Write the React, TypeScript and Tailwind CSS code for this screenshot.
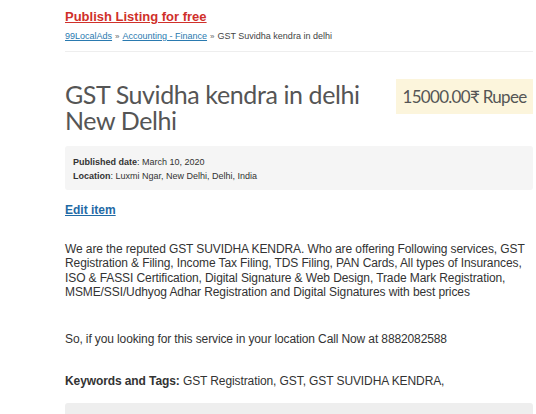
export default function App() {
  return (
    <div className="w-[536px] h-[414px] overflow-hidden bg-white font-['Liberation_Sans',Arial,sans-serif] text-[#333] leading-none">
      <div className="pl-[65px] pr-[3px] pt-[9px]">
        {/* top link */}
        <a href="#" className="block w-fit text-[13px] font-bold text-[#d0302a] underline leading-[16px]">
          Publish Listing for free
        </a>

        {/* breadcrumb */}
        <div className="mt-[5px] text-[9px] leading-[12px] text-[#444] pb-[8px] border-b border-[#eee]">
          <a href="#" className="text-[#2a7ab0] underline">99LocalAds</a>
          <span className="text-[8px] text-[#666] mx-[3px]">»</span>
          <a href="#" className="text-[#2a7ab0] underline">Accounting - Finance</a>
          <span className="text-[8px] text-[#666] mx-[3px]">»</span>
          <span>GST Suvidha kendra in delhi</span>
        </div>

        {/* title + price */}
        <div className="flex justify-between items-start mt-[29px]">
          <h1 className="w-[320px] font-['Lato',sans-serif] text-[25px] leading-[26px] text-[#555] tracking-[-0.4px]">
            GST Suvidha kendra in delhi New Delhi
          </h1>
          <div className="mt-[-2px] w-[137px] h-[35px] bg-[#fcf5dc] flex items-center justify-center font-['Lato',sans-serif] text-[17px] text-[#555] tracking-[-0.7px]">
            15000.00₹ Rupee
          </div>
        </div>

        {/* meta */}
        <div className="mt-[13px] bg-[#f5f5f5] rounded-[3px] h-[44px] px-[8px] pt-[9px] text-[9px] leading-[14px] text-[#333]">
          <div><b>Published date</b>: March 10, 2020</div>
          <div><b>Location</b>: Luxmi Ngar, New Delhi, Delhi, India</div>
        </div>

        <a href="#" className="block mt-[12px] text-[12px] font-bold text-[#1f6aa5] underline leading-[16px] w-fit">
          Edit item
        </a>

        {/* description */}
        <p className="mt-[24px] w-[468px] text-[12px] leading-[14.4px] tracking-[-0.1px] text-[#333]">
          We are the reputed GST SUVIDHA KENDRA. Who are offering Following services, GST Registration &amp; Filing, Income Tax Filing, TDS Filing, PAN Cards, All types of Insurances, ISO &amp; FASSI Certification, Digital Signature &amp; Web Design, Trade Mark Registration, MSME/SSI/Udhyog Adhar Registration and Digital Signatures with best prices
        </p>

        <p className="mt-[32px] text-[12px] leading-[14.4px] tracking-[-0.12px] text-[#333]">
          So, if you looking for this service in your location Call Now at 8882082588
        </p>

        <p className="mt-[28px] text-[12px] leading-[14.4px] tracking-[-0.1px] text-[#333]">
          <b>Keywords and Tags:</b> GST Registration, GST, GST SUVIDHA KENDRA,
        </p>

        <div className="mt-[15px] h-[30px] bg-[#eee] rounded-[3px]" />
      </div>
    </div>
  );
}
